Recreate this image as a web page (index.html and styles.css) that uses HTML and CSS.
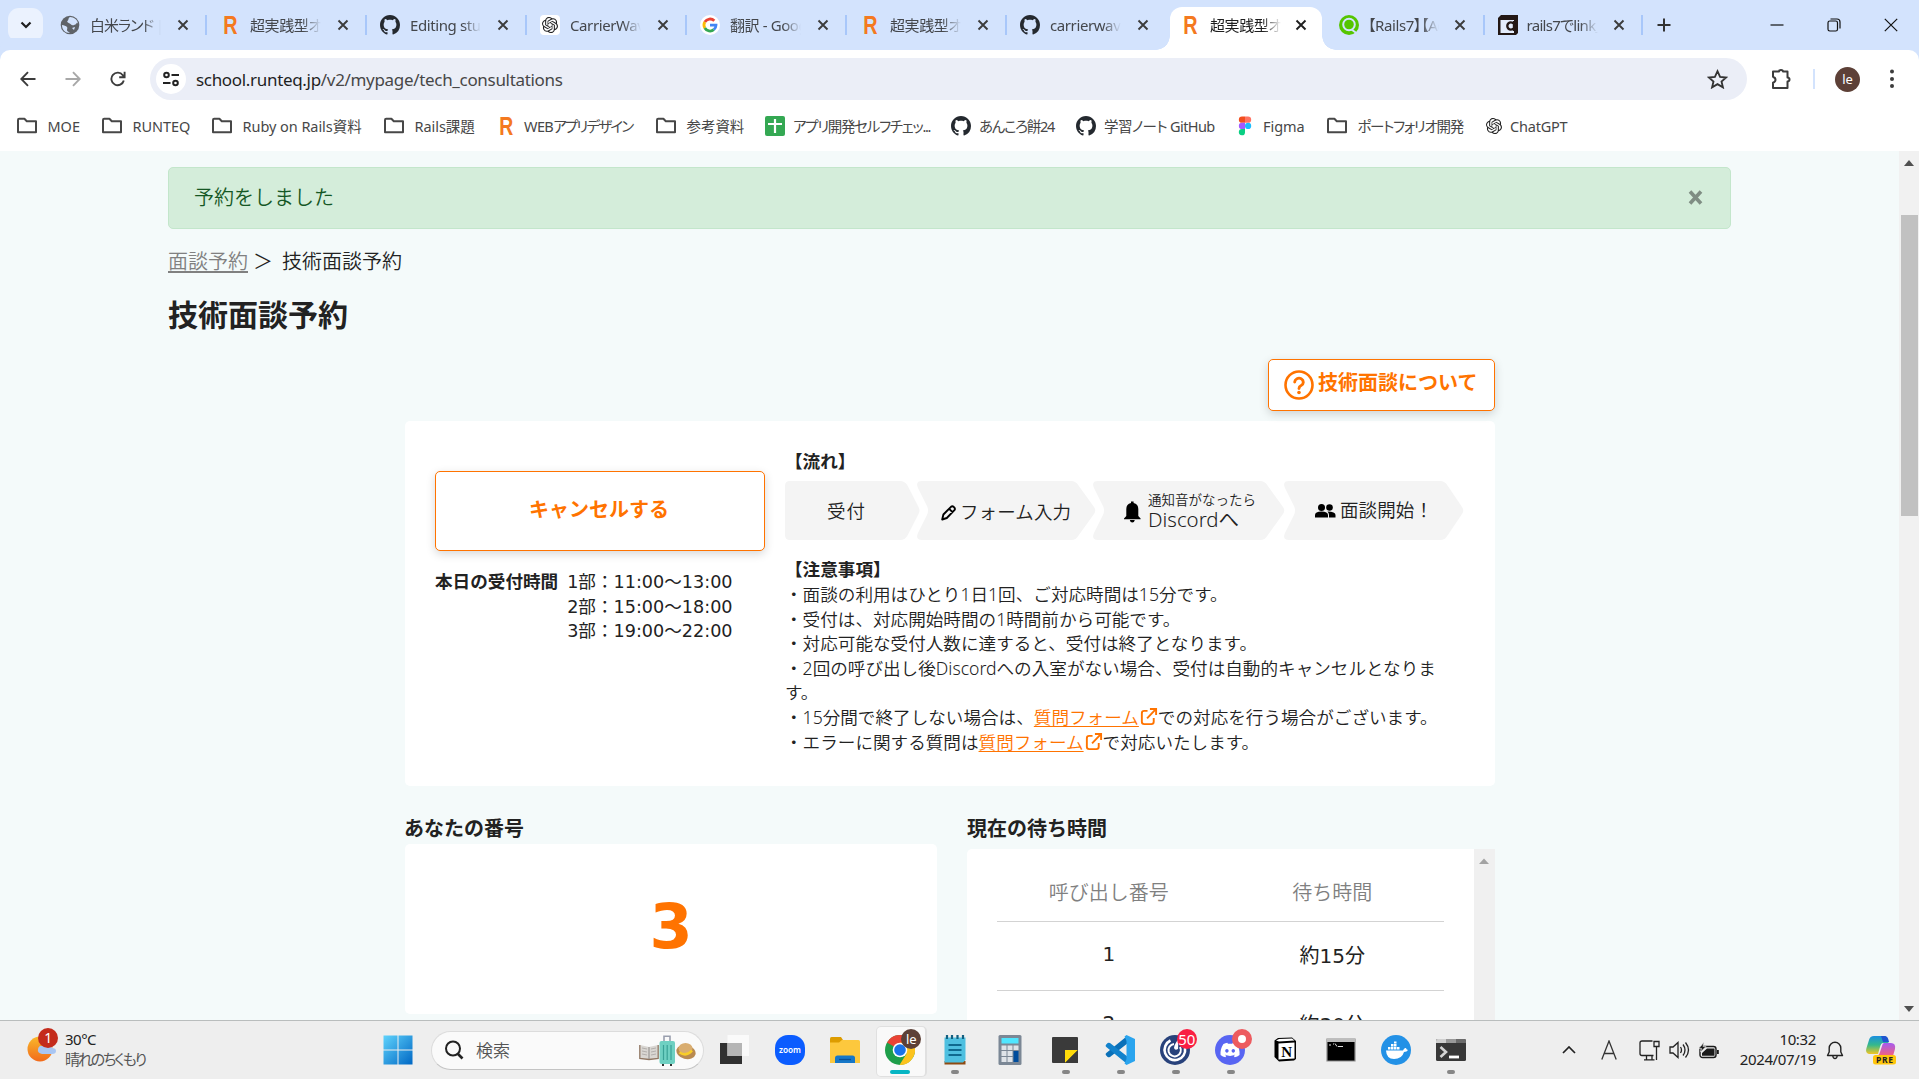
FILE: index.html
```html
<!DOCTYPE html>
<html lang="ja">
<head>
<meta charset="utf-8">
<title>技術面談予約</title>
<link rel="stylesheet" href="styles.css">
</head>
<body>
<svg class="defs" width="0" height="0" aria-hidden="true">
  <symbol id="close" viewBox="0 0 12 12"><path d="M1.5 1.5l9 9M10.5 1.5l-9 9" stroke="currentColor" stroke-width="1.9" fill="none"/></symbol>
  <symbol id="folder" viewBox="0 0 22 18"><path d="M2 3v12.2h18V4.2h-9.2L8.4 1.8H3.200Q2 1.800 2 3z" fill="none" stroke="#474747" stroke-width="2" stroke-linejoin="round"/></symbol>
  <symbol id="github" viewBox="0 0 16 16"><path fill="#24292f" d="M8 0C3.58 0 0 3.58 0 8c0 3.54 2.29 6.53 5.47 7.59.4.07.55-.17.55-.38 0-.19-.01-.82-.01-1.49-2.01.37-2.53-.49-2.69-.94-.09-.23-.48-.94-.82-1.13-.28-.15-.68-.52-.01-.53.63-.01 1.08.58 1.23.82.72 1.21 1.87.87 2.33.66.07-.52.28-.87.51-1.07-1.78-.2-3.64-.89-3.64-3.95 0-.87.31-1.59.82-2.15-.08-.2-.36-1.02.08-2.12 0 0 .67-.21 2.2.82.64-.18 1.32-.27 2-.27s1.36.09 2 .27c1.53-1.04 2.2-.82 2.2-.82.44 1.1.16 1.92.08 2.12.51.56.82 1.27.82 2.15 0 3.07-1.87 3.75-3.65 3.95.29.25.54.73.54 1.48 0 1.07-.01 1.93-.01 2.2 0 .21.15.46.55.38A8.01 8.01 0 0 0 16 8c0-4.42-3.58-8-8-8z"/></symbol>
  <symbol id="openai" viewBox="0 0 24 24"><path fill="#222" d="M22.2819 9.8211a5.9847 5.9847 0 0 0-.5157-4.9108 6.0462 6.0462 0 0 0-6.5098-2.9A6.0651 6.0651 0 0 0 4.9807 4.1818a5.9847 5.9847 0 0 0-3.9977 2.9 6.0462 6.0462 0 0 0 .7427 7.0966 5.98 5.98 0 0 0 .511 4.9107 6.051 6.051 0 0 0 6.5146 2.9001A5.9847 5.9847 0 0 0 13.2599 24a6.0557 6.0557 0 0 0 5.7718-4.2058 5.9894 5.9894 0 0 0 3.9977-2.9001 6.0557 6.0557 0 0 0-.7475-7.0729zm-9.022 12.6081a4.4755 4.4755 0 0 1-2.8764-1.0408l.1419-.0804 4.7783-2.7582a.7948.7948 0 0 0 .3927-.6813v-6.7369l2.02 1.1686a.071.071 0 0 1 .038.052v5.5826a4.504 4.504 0 0 1-4.4945 4.4944zm-9.6607-4.1254a4.4708 4.4708 0 0 1-.5346-3.0137l.142.0852 4.783 2.7582a.7712.7712 0 0 0 .7806 0l5.8428-3.3685v2.3324a.0804.0804 0 0 1-.0332.0615L9.74 19.9502a4.4992 4.4992 0 0 1-6.1408-1.6464zM2.3408 7.8956a4.485 4.485 0 0 1 2.3655-1.9728V11.6a.7664.7664 0 0 0 .3879.6765l5.8144 3.3543-2.0201 1.1685a.0757.0757 0 0 1-.071 0l-4.8303-2.7865A4.504 4.504 0 0 1 2.3408 7.872zm16.5963 3.8558L13.1038 8.364 15.1192 7.2a.0757.0757 0 0 1 .071 0l4.8303 2.7913a4.4944 4.4944 0 0 1-.6765 8.1042v-5.6772a.79.79 0 0 0-.407-.667zm2.0107-3.0231l-.142-.0852-4.7735-2.7818a.7759.7759 0 0 0-.7854 0L9.409 9.2297V6.8974a.0662.0662 0 0 1 .0284-.0615l4.8303-2.7866a4.4992 4.4992 0 0 1 6.6802 4.66zM8.3065 12.863l-2.02-1.1638a.0804.0804 0 0 1-.038-.0567V6.0742a4.4992 4.4992 0 0 1 7.3757-3.4537l-.142.0805L8.704 5.459a.7948.7948 0 0 0-.3927.6813zm1.0976-2.3654l2.602-1.4998 2.6069 1.4998v2.9994l-2.5974 1.4997-2.6067-1.4997Z"/></symbol>
  <symbol id="runteq" viewBox="0 0 20 20"><text x="3.200" y="19" font-family="Liberation Sans, sans-serif" font-weight="700" font-size="25" textLength="14" lengthAdjust="spacingAndGlyphs" fill="#f47920">R</text></symbol>
  <symbol id="external" viewBox="0 0 20 20"><path d="M9 3.500H5.500Q3 3.500 3 6v9q0 2.500 2.500 2.500H13q2.500 0 2.500-2.500v-4M11.500 1.500H18V8M17.500 2L8.500 11.500" fill="none" stroke="#ff7300" stroke-width="2"/></symbol>
  <symbol id="chrome" viewBox="0 0 30 30"><circle cx="15" cy="15" r="15" fill="#1e9e4a"/><path d="M15 15L2 7.500A15 15 0 0 1 28 7.500z" fill="#ea4335"/><path d="M15 7.500h13A15 15 0 0 1 14.500 30L21.500 18.700z" fill="#fcc31e"/><circle cx="15" cy="15" r="7.300" fill="#fff"/><circle cx="15" cy="15" r="5.800" fill="#1a73e8"/></symbol>
</svg>

<header class="tabstrip">
  <button class="tabsearch"><svg width="12" height="8" viewBox="0 0 12 8"><path d="M1.500 1.500L6 6l4.500-4.500" fill="none" stroke="#1f1f1f" stroke-width="2.200"/></svg></button>
  <div class="tab"><svg class="fav" viewBox="0 0 20 20"><circle cx="10" cy="10" r="9.300" fill="#5f6368"/><path d="M2 10c2 .5 4 .5 5 2s-1 3 1 4.500l2 1.500c-5 0-8-3.500-8-8zM10 2c-2 1-1 2.500-2.500 4S10 8 11 9.500s4 .5 5-.5 1-2 2 0c0-4-4-7-8-7zM12 13l3-1-1 3z" fill="#d3e3fd"/></svg><span class="title kana">白米ランド | ホーム</span><svg class="x"><use href="#close"/></svg></div>
  <div class="tab"><svg class="fav"><use href="#runteq"/></svg><span class="title">超実践型オンライン</span><svg class="x"><use href="#close"/></svg></div>
  <div class="tab"><svg class="fav"><use href="#github"/></svg><span class="title">Editing study</span><svg class="x"><use href="#close"/></svg></div>
  <div class="tab"><span class="fav plate"><svg width="16" height="16"><use href="#openai"/></svg></span><span class="title">CarrierWave</span><svg class="x"><use href="#close"/></svg></div>
  <div class="tab"><svg class="fav" viewBox="0 0 20 20"><circle cx="10" cy="10" r="10" fill="#fff"/><g fill="none" stroke-width="2.800"><path d="M14.300 5.800A6 6 0 0 0 4.800 7" stroke="#ea4335"/><path d="M4.800 7a6 6 0 0 0 0 6" stroke="#fbbc05"/><path d="M4.800 13a6 6 0 0 0 9 1.700" stroke="#34a853"/><path d="M13.800 14.700A6 6 0 0 0 16 10.200h-6" stroke="#4285f4"/></g></svg><span class="title">翻訳 - Google</span><svg class="x"><use href="#close"/></svg></div>
  <div class="tab"><svg class="fav"><use href="#runteq"/></svg><span class="title">超実践型オンライン</span><svg class="x"><use href="#close"/></svg></div>
  <div class="tab last"><svg class="fav"><use href="#github"/></svg><span class="title">carrierwave</span><svg class="x"><use href="#close"/></svg></div>
  <div class="tab active"><svg class="fav"><use href="#runteq"/></svg><span class="title">超実践型オンライン</span><svg class="x"><use href="#close"/></svg></div>
  <div class="tab narrow"><svg class="fav" viewBox="0 0 20 20"><circle cx="10" cy="10" r="10" fill="#55c500"/><circle cx="10" cy="9.500" r="5.800" fill="none" stroke="#d3e3fd" stroke-width="2"/><path d="M12.500 14.500l5.500 4" stroke="#d3e3fd" stroke-width="2"/></svg><span class="title">【Rails7】【Active】</span><svg class="x"><use href="#close"/></svg></div>
  <div class="tab narrow"><svg class="fav" viewBox="0 0 20 20"><path d="M3 0h17v18l-2 2H0V3z" fill="#231815"/><path d="M2.500 5H16v13H2.500z" fill="#e4edfc"/><path d="M15.500 8.500a3.600 3.600 0 1 0 0 5" fill="none" stroke="#231815" stroke-width="2.400"/><path d="M16 6v10" stroke="#231815" stroke-width="2.400"/></svg><span class="title rails">rails7でlink_to</span><svg class="x"><use href="#close"/></svg></div>
  <svg class="newtab" viewBox="0 0 14 14"><path d="M7 .5v13M.5 7h13" stroke="#333" stroke-width="2"/></svg>
  <div class="winctl">
    <svg width="14" height="14" viewBox="0 0 14 14"><path d="M.5 7h13" stroke="#111" stroke-width="1.200"/></svg>
    <svg width="14" height="14" viewBox="0 0 14 14"><rect x="1" y="3" width="9.500" height="10" rx="1.800" fill="none" stroke="#111" stroke-width="1.200"/><path d="M3.500 1h6.500q3 0 3 3v6.500" fill="none" stroke="#111" stroke-width="1.200"/></svg>
    <svg width="14" height="14" viewBox="0 0 14 14"><path d="M.8.8l12.400 12.400M13.200.8L.8 13.200" stroke="#111" stroke-width="1.200"/></svg>
  </div>
</header>

<div class="chrome">
  <div class="toolbar">
    <svg class="nav" viewBox="0 0 16 16"><path d="M15.500 8H1.500M8 1.200L1.300 8 8 14.800" fill="none" stroke="#3c3c3c" stroke-width="1.900"/></svg>
    <svg class="nav" viewBox="0 0 16 16"><path d="M.5 8h14M8 1.200L14.700 8 8 14.800" fill="none" stroke="#a8a8a8" stroke-width="1.900"/></svg>
    <svg class="nav" viewBox="0 0 16 16"><path d="M13.800 9.500A6.300 6.300 0 1 1 12.800 4.200L14 5.600M14.600.8v5.400H9.200" fill="none" stroke="#3c3c3c" stroke-width="1.900"/></svg>
    <div class="omnibox">
      <span class="site"><svg width="18" height="16" viewBox="0 0 18 16"><g fill="none" stroke="#222" stroke-width="2"><circle cx="4.500" cy="4" r="2.300"/><path d="M9.500 4H17M1 12h7.500"/><circle cx="13.500" cy="12" r="2.300"/></g></svg></span>
      <span class="url"><b>school.runteq.jp</b>/v2/mypage/tech_consultations</span>
      <svg class="star" viewBox="0 0 22 20"><path d="M11 1.800l2.700 6 6.400.6-4.900 4.200 1.500 6.200-5.700-3.400-5.700 3.400 1.500-6.200L1.900 8.400l6.400-.6z" fill="none" stroke="#333" stroke-width="1.900"/></svg>
    </div>
    <svg class="puzzle" viewBox="0 0 22 22"><path d="M3 3.500h6Q9 2 11 2t2 1.500h4.500V9.500q2 .3 2 2t-2 2V20H3v-5.200q2.500-1 2.500-3T3 8.800z" fill="none" stroke="#3c3c3c" stroke-width="2" stroke-linejoin="round"/></svg>
    <i class="tsep"></i>
    <span class="avatar">le</span>
    <svg class="dots" viewBox="0 0 4 20"><g fill="#3c3c3c"><circle cx="2" cy="2.500" r="2"/><circle cx="2" cy="10" r="2"/><circle cx="2" cy="17" r="2"/></g></svg>
  </div>
  <nav class="bookmarks">
    <a><svg><use href="#folder"/></svg><span>MOE</span></a>
    <a><svg><use href="#folder"/></svg><span>RUNTEQ</span></a>
    <a><svg><use href="#folder"/></svg><span>Ruby on Rails資料</span></a>
    <a><svg><use href="#folder"/></svg><span>Rails課題</span></a>
    <a class="close-set"><svg><use href="#runteq"/></svg><span><span class="snug">WEB</span><span class="tighter">アプリデザイン</span></span></a>
    <a><svg><use href="#folder"/></svg><span>参考資料</span></a>
    <a class="close-set"><svg viewBox="0 0 20 20"><rect width="20" height="20" rx="2" fill="#34a853"/><path d="M10 3v14M3 8h14" stroke="#fff" stroke-width="2.200"/></svg><span class="tight">アプリ開発セルフチェッ...</span></a>
    <a class="close-set"><svg><use href="#github"/></svg><span class="tight">あんころ餅24</span></a>
    <a class="close-set"><svg><use href="#github"/></svg><span class="snug">学習ノート GitHub</span></a>
    <a class="close-set"><svg viewBox="0 0 20 20"><path d="M10 .5H7a3.100 3.100 0 0 0 0 6.300h3z" fill="#f24e1e"/><path d="M10 .5h3a3.100 3.100 0 0 1 0 6.300h-3z" fill="#ff7262"/><path d="M10 6.800H7a3.100 3.100 0 0 0 0 6.300h3z" fill="#a259ff"/><circle cx="13.100" cy="9.900" r="3.100" fill="#1abcfe"/><path d="M10 13.100H7a3.100 3.100 0 1 0 3 3.300z" fill="#0acf83"/></svg><span>Figma</span></a>
    <a><svg><use href="#folder"/></svg><span class="tight">ポートフォリオ開発</span></a>
    <a class="close-set"><svg viewBox="-3 -3 30 30"><use href="#openai" width="24" height="24"/></svg><span class="gpt">ChatGPT</span></a>
  </nav>
</div>

<div class="viewport">
  <main>
    <div class="alert"><span>予約をしました</span><svg width="15" height="15" viewBox="0 0 15 15"><path d="M2 1.500l11 12M13 1.500l-11 12" stroke="#7f8d83" stroke-width="3.600"/></svg></div>
    <div class="crumbs"><a>面談予約</a><span class="gt">＞</span><span>技術面談予約</span></div>
    <h1>技術面談予約</h1>
    <div class="panel">
      <div class="about"><a class="btn help"><svg width="30" height="30" viewBox="0 0 30 30"><circle cx="15" cy="15" r="13.500" fill="none" stroke="#ff7300" stroke-width="2.600"/><path d="M10.700 12a4.300 3.900 0 1 1 6.400 3.500Q15 16.500 15 18.500" fill="none" stroke="#ff7300" stroke-width="2.900" stroke-linecap="round"/><circle cx="15" cy="22.500" r="1.800" fill="#ff7300"/></svg><span>技術面談について</span></a></div>
      <section class="card">
        <div class="left">
          <a class="btn cancel">キャンセルする</a>
          <div class="hours"><strong>本日の受付時間</strong><div><p>1部：11:00～13:00</p><p>2部：15:00～18:00</p><p>3部：19:00～22:00</p></div></div>
        </div>
        <div class="right">
          <strong>【流れ】</strong>
          <svg class="flow" width="680" height="59" viewBox="0 0 680 59">
            <g fill="#f4f4f4">
              <path d="M5 0H115Q120 0 122.500 4.500L133.500 26Q135.500 29.500 133.500 33L122.500 54.500Q120 59 115 59H5Q0 59 0 54V5Q0 0 5 0z"/>
              <path d="M137 0H286Q291 0 293.500 4.500L309 26Q311.500 29.500 309 33L293.500 54.500Q291 59 286 59H137Q130 59 133 52L142 34Q144 29.500 142 25L133 7Q130 0 137 0z"/>
              <path d="M313 0H475Q480 0 482.500 4.500L498 26Q500.500 29.500 498 33L482.500 54.500Q480 59 475 59H313Q306 59 309 52L318 34Q320 29.500 318 25L309 7Q306 0 313 0z"/>
              <path d="M504 0H655Q660 0 662.500 4.500L677 26Q679.500 29.500 677 33L662.500 54.500Q660 59 655 59H504Q497 59 500 52L509 34Q511 29.500 509 25L500 7Q497 0 504 0z"/>
            </g>
            <g fill="#222" font-size="18.500">
              <text x="42" y="36.500" textLength="38">受付</text>
              <text x="175" y="37.500" textLength="111">フォーム入力</text>
              <text x="363" y="23.500" font-size="13.500" textLength="108">通知音がなったら</text>
              <text x="363" y="46" textLength="91" font-size="20" lengthAdjust="spacingAndGlyphs">Discordへ</text>
              <text x="555" y="36" textLength="93">面談開始！</text>
            </g>
            <g transform="translate(156 24)"><path d="M1.200 14.500l1.200-5L10 1.800q1.400-1 2.800.2l.6.700q1 1.300 0 2.500L5.800 13z M8.200 3.800l3.500 3.500" fill="none" stroke="#000" stroke-width="1.900" stroke-linejoin="round"/></g>
            <path d="M339 37.500l2.300-2.500V28q0-5 4.700-6V20.500h2.600V22q4.700 1 4.700 6v7l2.300 2.500v.8H339zM344.800 39h5q-.5 2.500-2.500 2.500t-2.500-2.500z"/>
            <g><circle cx="536.500" cy="26.500" r="3.500"/><circle cx="544.500" cy="26.500" r="3.300"/><path d="M530 36.500v-2.500q0-3.500 6.500-3.500t6.500 3.500v2.500zM544 36.500v-2.500q0-2-1.500-3.500 8 0 8 3.500v2.500z"/></g>
          </svg>
          <strong>【注意事項】</strong>
          <p>・面談の利用はひとり1日1回、ご対応時間は15分です。</p>
          <p>・受付は、対応開始時間の1時間前から可能です。</p>
          <p>・対応可能な受付人数に達すると、受付は終了となります。</p>
          <p>・2回の呼び出し後Discordへの入室がない場合、受付は自動的キャンセルとなりま<br>す。</p>
          <p>・15分間で終了しない場合は、<a>質問フォーム</a><svg class="ext"><use href="#external"/></svg>での対応を行う場合がございます。</p>
          <p>・エラーに関する質問は<a>質問フォーム</a><svg class="ext"><use href="#external"/></svg>で対応いたします。</p>
        </div>
      </section>
      <div class="cols">
        <section class="mine"><h2>あなたの番号</h2><div class="number">3</div></section>
        <section class="wait"><h2>現在の待ち時間</h2>
          <div class="box">
            <div class="rows">
              <div class="row head"><span>呼び出し番号</span><span>待ち時間</span></div>
              <div class="row"><span>1</span><span>約15分</span></div>
              <div class="row"><span>2</span><span>約30分</span></div>
            </div>
            <div class="inner-scroll"><svg width="10" height="6" viewBox="0 0 10 6"><path d="M0 6l5-5.500L10 6z" fill="#a3a3a3"/></svg></div>
          </div>
        </section>
      </div>
    </div>
  </main>
  <div class="scrollbar"><svg width="10" height="6" viewBox="0 0 10 6"><path d="M0 6l5-6 5 6z" fill="#505050"/></svg><i></i><svg class="down" width="10" height="6" viewBox="0 0 10 6"><path d="M0 0h10L5 6z" fill="#505050"/></svg></div>
</div>

<footer class="taskbar">
  <div class="weather">
    <svg width="32" height="38" viewBox="0 0 32 38"><defs><linearGradient id="sun" x2="0" y2="1"><stop offset="0" stop-color="#f9b92b"/><stop offset="1" stop-color="#f26a1b"/></linearGradient></defs><circle cx="13" cy="23" r="12.500" fill="url(#sun)"/><path d="M15 28q-5-1-4-5t5-3q2-5 6-3t3 5q4 0 4 3t-4 3z" fill="#a9c6f3"/><circle cx="21" cy="12" r="10" fill="#c42b1c"/><text x="21" y="17" text-anchor="middle" fill="#fff" font-size="14">1</text></svg>
    <div><p>30°C</p><p class="cond">晴れのちくもり</p></div>
  </div>
  <div class="apps">
    <svg class="win" width="30" height="30" viewBox="0 0 30 30"><defs><linearGradient id="w" x2="1" y2="1"><stop offset="0" stop-color="#5fd3fc"/><stop offset="1" stop-color="#0067c4"/></linearGradient></defs><path d="M.5.5h14v14H.5zM15.500.5h14v14h-14zM.5 15.500h14v14H.5zM15.500 15.500h14v14h-14z" fill="url(#w)"/></svg>
    <div class="search"><svg width="20" height="20" viewBox="0 0 20 20"><circle cx="9" cy="8.500" r="7" fill="none" stroke="#222" stroke-width="2"/><path d="M13.500 13.500l5 5" stroke="#222" stroke-width="2.600"/></svg><span>検索</span>
      <svg class="trip" width="58" height="32" viewBox="0 0 58 32"><path d="M1 11l9 2 9-2v13l-9 1.500L1 24z" fill="#d9d6d2"/><path d="M.8 11v13.500l9.200 1 9.200-1V11" fill="none" stroke="#8f7662" stroke-width="1.300"/><path d="M10 13v12" stroke="#8d8a88"/><path d="M3 14l5 1M3 17l5 1M3 20l5 1M12 15l5-1M12 18l5-1M12 21l5-1" stroke="#b3afac"/><path d="M25 8V2.200h6V8" fill="none" stroke="#9a9fae" stroke-width="1.600"/><rect x="20.500" y="7" width="15.500" height="23" rx="2" fill="#6fd0c2"/><path d="M24.500 11v15M28.200 11v15M32 11v15" stroke="#3aa297" stroke-width="1.200"/><path d="M23 31h2M31 31h2" stroke="#333" stroke-width="2"/><ellipse cx="47" cy="18" rx="9.800" ry="7" transform="rotate(15 47 18)" fill="#b98a50"/><ellipse cx="46.500" cy="14.500" rx="7" ry="5.500" fill="#d9ad70"/><path d="M40.500 18.500q7 4.500 12.500-2" fill="none" stroke="#f8cd28" stroke-width="2.600"/></svg>
    </div>
    <div class="icons">
      <span><svg viewBox="0 0 30 30"><path d="M0 8h22v21H0z" fill="#303030"/><path d="M7.500 0H29v21H7.500z" fill="#fafafa"/><path d="M7.500 8H22v13H7.500z" fill="#b5b5b5"/></svg></span>
      <span><svg viewBox="0 0 30 30"><rect width="30" height="30" rx="13" fill="#0b5cff"/><text x="15" y="18" text-anchor="middle" fill="#fff" font-size="9" font-weight="600" textLength="22" lengthAdjust="spacingAndGlyphs">zoom</text></svg></span>
      <span><svg viewBox="0 0 30 30"><path d="M0 3.500Q0 2 1.500 2H11l2 3v4H0z" fill="#dd9c00"/><path d="M0 7.500h9L12 5h16.500Q30 5 30 6.500V28H0z" fill="#fdc83d"/><path d="M5 28v-5q0-2.500 2.500-2.500h15Q25 20.500 25 23v5z" fill="#1677c8"/><path d="M9 24.500h12" stroke="#0a4f96" stroke-width="1.300"/></svg></span>
      <span class="on"><svg><use href="#chrome"/></svg><b class="badge brown">le</b><i class="line wide"></i></span>
      <span><svg viewBox="0 0 30 30"><path d="M4.500 26h21v3.500h-21z" fill="#8f4a12"/><path d="M4.500 2.500h21V25L23 27.500H4.500z" fill="#4fc0e0"/><path d="M7 0v4M12 0v4M17.500 0v4M23 0v4" stroke="#125f80" stroke-width="2.200"/><path d="M8.500 10h13M8.500 15h13M8.500 20h13" stroke="#0f6a8f" stroke-width="1.800"/></svg><i class="line"></i></span>
      <span><svg viewBox="0 0 30 30"><rect x="3.500" width="23" height="30" rx="1.500" fill="#7b8795"/><rect x="6.500" y="3" width="17" height="5.500" fill="#50e6ff"/><path d="M6.500 10.500h5v4.500h-5zM12.500 10.500h5v4.500h-5zM18.500 10.500h5v4.500h-5zM6.500 16h5v5h-5zM12.500 16h5v5h-5zM6.500 22h5v5h-5zM12.500 22h5v5h-5z" fill="#dfe3e8"/><path d="M18.500 16h5v11h-5z" fill="#004c9c"/></svg></span>
      <span><svg viewBox="0 0 30 30"><rect x="2" y="2" width="26" height="26" rx="1" fill="#3a3a3a"/><path d="M15 15h13L15 28z" fill="#ffdb0a"/><path d="M28 15v13H15z" fill="#3a3a3a"/></svg><i class="line"></i></span>
      <span><svg viewBox="0 0 30 30"><path d="M21.500 1.500L1.300 18q-1.300 1-.3 2.200l1.700 1.700q1 .9 2.300 0L23 8z" fill="#0a70b8"/><path d="M21.500 28.500L1.300 12q-1.300-1-.3-2.200l1.700-1.700q1-.9 2.300 0L23 22z" fill="#1282cc"/><path d="M21.500 0L30 4v22l-8.500 4-2-1.500L21.500 24V6l-2-4.500z" fill="#2aa4ee"/></svg><i class="line"></i></span>
      <span><svg viewBox="0 0 30 30"><circle cx="15" cy="15" r="15" fill="#28427b"/><path d="M10.500 5.500A10.300 10.300 0 1 0 25 13" fill="none" stroke="#fff" stroke-width="2.600"/><path d="M14 9A6.200 6.200 0 1 0 20 12" fill="none" stroke="#fff" stroke-width="2"/><path d="M18.500 4l-.5 10q-3 2-4-1 0-3 4.500-9z" fill="#fff"/></svg><b class="badge red">50</b><i class="line"></i></span>
      <span><svg viewBox="0 0 30 30"><circle cx="15" cy="15" r="15" fill="#5865f2"/><path transform="translate(5.500 5.500) scale(.8)" fill="#fff" d="M20.317 4.370a19.791 19.791 0 0 0-4.885-1.515l-.7 1.300a18.270 18.270 0 0 0-5.470 0l-.7-1.300A19.736 19.736 0 0 0 3.677 4.370C.533 9.046-.32 13.580.099 18.058a19.900 19.900 0 0 0 5.993 3.030l1.300-2-1.900-.9.400-.3c3.900 1.800 8.200 1.800 12.100 0l.4.3-1.900.9 1.300 2a19.839 19.839 0 0 0 6.002-3.030c.5-5.177-.838-9.674-3.549-13.660zM8.020 15.330c-1.180 0-2.160-1.080-2.160-2.420s.96-2.420 2.160-2.420 2.180 1.100 2.160 2.420c0 1.340-.96 2.420-2.160 2.420zm7.970 0c-1.180 0-2.160-1.080-2.160-2.420s.96-2.420 2.160-2.420 2.180 1.100 2.160 2.420c0 1.340-.95 2.420-2.160 2.420z"/></svg><b class="badge rose"></b><i class="line"></i></span>
      <span><svg viewBox="0 0 30 30"><path d="M4.500 5.500L8 3l14-.5 4 3.500v18l-2 1.500-15 1L4.500 22z" fill="#000"/><path d="M6 5.500l3-1.500 13-.5 2.500 2L9 6.500z" fill="#fff"/><path d="M8.500 8.500L24.500 7.500v16l-16 1z" fill="#fff"/><text x="16.700" y="21.500" text-anchor="middle" font-family="Liberation Serif, serif" font-weight="700" font-size="15">N</text></svg></span>
      <span><svg viewBox="0 0 30 30"><path d="M1 4h28v22H1z" fill="#000" stroke="#8d8d8d" stroke-width="1.200"/><path d="M1 4h28v3H1z" fill="#bdbdbd"/><path d="M4 9v2M7 9h1M9 8.500l2 3M12 11.500h5" stroke="#ddd"/></svg></span>
      <span><svg viewBox="0 0 30 30"><circle cx="15" cy="15" r="15" fill="#2391e6"/><path d="M5 15.500h17q1-3 3-2.500 0 1.500 2 2-1 2-4 2-2 7-10 7-7.500 0-8-8.500zM7 12h2.500v2.500H7zM10 12h2.500v2.500H10zM13 12h2.500v2.500H13zM16 12h2.500v2.500H16zM10 9h2.500v2.500H10zM13 9h2.500v2.500H13zM13 6.500h2.500v2H13z" fill="#fff"/></svg></span>
      <span><svg viewBox="0 0 30 30"><rect y="4" width="30" height="22" rx="1.500" fill="#383838"/><path d="M0 8V5.500Q0 4 1.500 4H10v4z" fill="#d0d0d0"/><path d="M10 4h10v4H10z" fill="#999"/><path d="M20 4h8.500Q30 4 30 5.500V8H20z" fill="#6b6b6b"/><path d="M4.500 12l5.500 5-5.500 5" fill="none" stroke="#d4d4d4" stroke-width="2.600"/><path d="M13 22h10" stroke="#fff" stroke-width="2.800"/></svg><i class="line"></i></span>
    </div>
  </div>
  <div class="tray">
    <svg width="14" height="8" viewBox="0 0 14 8"><path d="M1 7l6-6 6 6" fill="none" stroke="#222" stroke-width="1.700"/></svg>
    <svg class="ime" width="16" height="20" viewBox="0 0 16 20"><path d="M.8 19.500L8 1l7.200 18.500M3.200 13.500h9.600" fill="none" stroke="#333" stroke-width="1.300"/></svg>
    <svg class="net" width="21" height="21" viewBox="0 0 21 21"><g fill="none" stroke="#222" stroke-width="1.300"><path d="M13.500 1H3Q1 1 1 3v10.500q0 2 2 2h11.500M5 19.800h10.500M7.500 16v3.500M13 16v3.500M15 1.500h5v5h-5zM17.500 6.500v13.500"/></g></svg>
    <svg class="vol" width="21" height="18" viewBox="0 0 21 18"><g fill="none" stroke="#222" stroke-width="1.300"><path d="M1 6h3l5-4.500v15L4 12H1zM11.500 6q2 3 0 6M14 3.500q4 5.500 0 11M16.500 1.500q6 7.500 0 15"/></g></svg>
    <svg class="bat" width="20" height="17" viewBox="0 0 20 17"><rect x="1" y="4.500" width="16" height="11" rx="2.500" fill="none" stroke="#1a1a1a" stroke-width="1.400"/><path d="M8 6.500h7.500v7.200H3V11zM18 8h1.800v4H18z" fill="#1a1a1a"/><path d="M5 0L0 6.500h2.500L1.500 10 7 4.500H4z" fill="#1a1a1a" stroke="#eee" stroke-width=".6"/></svg>
    <div class="clock"><p>10:32</p><p>2024/07/19</p></div>
    <svg class="bell" width="18" height="19" viewBox="0 0 18 19"><path d="M1.500 14.500L3.200 11V7a5.800 5.800 0 0 1 11.600 0v4l1.700 3.500zM6.800 15q.3 2.500 2.200 2.500t2.200-2.500" fill="none" stroke="#222" stroke-width="1.400" stroke-linejoin="round"/></svg>
    <svg class="copilot" width="30" height="30" viewBox="0 0 30 30"><defs><linearGradient id="c1" x2="0" y2="1"><stop offset="0" stop-color="#1a8fe0"/><stop offset=".5" stop-color="#35b98c"/><stop offset="1" stop-color="#f3c623"/></linearGradient><linearGradient id="c2" x2="0" y2="1"><stop offset="0" stop-color="#a55bf0"/><stop offset="1" stop-color="#f4627c"/></linearGradient></defs><path d="M8 1h10q3 0 4 4l.5 3H17q-2 0-3 4l-2 7H3q-4-1-2.500-6L3 5q1-4 5-4z" fill="url(#c1)"/><path d="M15 1h4q3 0 4 6h-6z" fill="#1f55cf"/><path d="M18 8h7q5 0 4 6l-2 7H10q3 0 4-4l2-6q.5-3 2-3z" fill="url(#c2)"/><rect x="7" y="20" width="23" height="9.500" rx="2.500" fill="#ffc60b"/><text x="18.500" y="27.700" text-anchor="middle" font-size="8.500" font-weight="700" fill="#222" textLength="17">PRE</text></svg>
  </div>
</footer>
</body>
</html>
```
FILE: styles.css
```css
* { box-sizing: border-box; }
body {
  margin: 0;
  width: 1919px;
  height: 1079px;
  overflow: hidden;
  display: flex;
  flex-direction: column;
  font-family: "Noto Sans", "Noto Sans CJK JP", sans-serif;
  color: #222;
  background: #fff;
}
p, h1, h2 { margin: 0; }
strong { font-weight: 700; }
svg { flex: none; display: block; }
.defs { position: absolute; }

/* tab strip */
.tabstrip {
  height: 50px;
  flex: none;
  display: flex;
  align-items: center;
  background: #d3e3fd;
  padding-left: 8px;
  font-size: 15px;
  letter-spacing: -.4px;
  color: #44474c;
  font-feature-settings: "palt";
}
.tabsearch {
  width: 35px;
  height: 34px;
  border: 0;
  border-radius: 11px;
  background: #ebf2fe;
  padding: 0;
  display: grid;
  place-items: center;
  margin-right: 4px;
}
.tab {
  width: 160px;
  height: 26px;
  flex: none;
  display: flex;
  align-items: center;
  padding-left: 13px;
  background: linear-gradient(#a8c7fa, #a8c7fa) right center / 2px 20px no-repeat;
}
.tab.last { background: none; }
.tab.narrow { width: 158.5px; }
.fav { width: 20px; height: 20px; flex: none; }
.plate { background: #fff; border-radius: 4px; display: grid; place-items: center; }
.title {
  width: 71px;
  margin-left: 10px;
  line-height: 26px;
  white-space: nowrap;
  overflow: hidden;
  -webkit-mask-image: linear-gradient(90deg, #000 75%, transparent);
  mask-image: linear-gradient(90deg, #000 75%, transparent);
}
.title.kana { letter-spacing: -1px; }
.title.rails { letter-spacing: -.7px; }
.x { width: 12px; height: 12px; margin-left: 16px; color: #3c3c3c; }
.narrow .title { margin-left: 9px; }
.narrow .x { margin-left: 15px; }
.tab.active {
  width: 152px;
  height: 43px;
  margin: 7px 4px 0 3px;
  padding: 0 0 7px 10px;
  border-radius: 12px 12px 0 0;
  background: #fff;
  color: #1f1f1f;
  position: relative;
}
.active .x { margin-left: 14px; color: #1f1f1f; }
.tab.active::before, .tab.active::after {
  content: "";
  position: absolute;
  bottom: 0;
  width: 14px;
  height: 14px;
}
.tab.active::before { left: -14px; background: radial-gradient(circle at 0 0, transparent 13.5px, #fff 14px); }
.tab.active::after { right: -14px; background: radial-gradient(circle at 100% 0, transparent 13.5px, #fff 14px); }
.newtab { width: 14px; height: 14px; margin-left: 14px; }
.winctl { margin-left: auto; display: flex; gap: 43px; padding-right: 21px; }

/* toolbar */
.chrome { height: 101px; flex: none; background: #fff; box-shadow: 0 -12px 0 0 #d3e3fd; border-radius: 10px 10px 0 0; }
.toolbar { height: 58px; padding: 8px 0 8px 20px; display: flex; align-items: center; }
.nav { width: 16px; height: 16px; margin-right: 29px; }
.omnibox {
  width: 1597px;
  height: 42px;
  margin-left: -5px;
  background: #ebeef7;
  border-radius: 21px;
  display: flex;
  align-items: center;
  padding-left: 6px;
}
.site { width: 30px; height: 30px; border-radius: 50%; background: #fff; display: grid; place-items: center; }
.url { margin: 2px 0 0 10px; font-size: 17px; line-height: 30px; color: #474747; letter-spacing: -.32px; }
.url b { font-weight: 400; color: #1f1f1f; }
.star { width: 21px; height: 20px; margin-left: auto; margin-right: 19px; }
.puzzle { width: 22px; height: 22px; margin-left: 23px; }
.tsep { width: 2px; height: 20px; background: #d3e3fd; margin-left: 21px; }
.avatar {
  width: 25px;
  height: 25px;
  margin-left: 20px;
  border-radius: 50%;
  background: #5d4037;
  color: #fff;
  font-size: 13px;
  line-height: 24px;
  text-align: center;
}
.dots { width: 4px; height: 20px; margin-left: 30px; }
.bookmarks {
  height: 36px;
  padding-left: 16px;
  display: grid;
  grid-template-columns: 85px 110px 172px 113px 159px 110px 186px 125px 159px 91px 158px 100px;
  font-size: 14.5px;
  letter-spacing: -.05px;
  color: #474747;
  font-feature-settings: "palt";
}
.bookmarks a { display: flex; align-items: center; white-space: nowrap; line-height: 24px; }
.bookmarks svg { width: 22px; height: 20px; margin-right: 9.5px; }
.bookmarks .close-set svg { width: 20px; margin-right: 8px; }
.snug { letter-spacing: -.6px; }
.tight { letter-spacing: -1.3px; }
.tighter { letter-spacing: -1.8px; }
.gpt { margin-left: -2px; letter-spacing: -.2px; }

/* page */
.viewport { flex: 1; min-height: 0; display: flex; overflow: hidden; background: #f4fafa; }
main { flex: 1; padding: 16px 168px 0; font-weight: 350; }
.alert {
  height: 62px;
  border: 1px solid #c3e6cb;
  border-radius: 5px;
  background: #d4edda;
  color: #155724;
  font-size: 20px;
  line-height: 30px;
  padding: 0 27px 0 25px;
  display: flex;
  align-items: center;
  justify-content: space-between;
}
.alert svg { margin-top: -1px; }
.crumbs { margin-top: 18px; font-size: 20px; line-height: 30px; display: flex; }
.crumbs a { color: #808080; text-decoration: underline; text-underline-offset: 2px; }
.gt { width: 34px; padding-left: 5px; }
h1 { margin-top: 19px; font-size: 30px; line-height: 38px; font-weight: 700; }
.panel { width: 1090px; margin: 25px 0 0 237px; }
.about { display: flex; justify-content: flex-end; }
.btn {
  background: #fff;
  border: 1.5px solid #ff7300;
  border-radius: 5px;
  color: #ff7300;
  font-weight: 700;
  font-size: 20px;
  display: flex;
  align-items: center;
  box-shadow: 0 3px 10px rgba(0, 0, 0, .16);
}
.help { width: 227px; height: 52px; padding-left: 15px; gap: 4px; }
.help span { line-height: 28px; margin-top: -4px; }
.card {
  height: 365px;
  margin-top: 10px;
  border-radius: 5px;
  background: #fff;
  padding: 0 30px;
  display: flex;
  gap: 20px;
  font-size: 17.6px;
  line-height: 24.6px;
}
.left { width: 330px; padding-top: 50px; }
.cancel { height: 80px; justify-content: center; padding: 0 2px 2px 0; }
.hours { display: flex; gap: 9px; margin-top: 18px; white-space: nowrap; }
.hours p { position: relative; top: 1px; font-family: "DejaVu Sans", "Noto Sans CJK JP", sans-serif; font-weight: 400; }
.right { width: 680px; padding-top: 28px; white-space: nowrap; }
.right strong { display: block; }
.flow { margin: 7.4px 0 17.4px; }
.right p a { color: #ff7300; text-decoration: underline; text-underline-offset: 2px; }
.ext { display: inline-block; width: 19px; height: 20px; vertical-align: -3px; }
.cols { display: flex; gap: 30px; margin-top: 28px; }
h2 { font-size: 20px; line-height: 30px; font-weight: 700; }
.mine { width: 532px; }
.mine h2 { margin-left: -1px; }
.number {
  height: 170px;
  border-radius: 5px;
  background: #fff;
  display: grid;
  place-items: center;
  color: #ff7300;
  font: 700 62px/1 "DejaVu Sans", sans-serif;
  padding-bottom: 4px;
}
.wait { width: 528px; }
.box { height: 220px; margin-top: 5px; background: #fff; border-radius: 5px 0 0 0; display: flex; }
.rows { flex: 1; padding: 15px 30px 0; font-size: 20px; }
.row {
  height: 69px;
  display: grid;
  grid-template-columns: 1fr 1fr;
  align-items: center;
  text-align: center;
  border-bottom: 1px solid #d3d3d3;
  padding-bottom: 4px;
  font-family: "DejaVu Sans", "Noto Sans CJK JP", sans-serif;
  font-weight: 400;
}
.head { height: 58px; color: #808080; padding-bottom: 2px; font-weight: 350; }
.inner-scroll { width: 21px; background: #f0f0f0; padding: 9px 0 0 5px; }
.scrollbar { width: 20px; background: #f1f1f1; display: flex; flex-direction: column; align-items: center; padding: 9px 0 8px; }
.scrollbar i { width: 17px; height: 301px; margin: 49px 0 auto 1px; background: #c1c1c1; }

/* taskbar */
.taskbar { height: 59px; flex: none; background: #eee; border-top: 1px solid #b9bdbd; display: flex; }
.weather { width: 383px; padding: 5px 0 0 27px; display: flex; gap: 6px; font-size: 15px; line-height: 19.5px; letter-spacing: -.5px; font-feature-settings: "palt"; }
.weather p:first-child { margin-top: 4px; }
.weather .cond { color: #555; letter-spacing: -2.1px; }
.apps { display: flex; align-items: center; }
.search {
  width: 273px;
  height: 39px;
  margin-left: 18px;
  border: 1px solid #dcdcdc;
  border-bottom-color: #c4c4c4;
  border-radius: 20px;
  background: #fafafa;
  display: flex;
  align-items: center;
  padding: 0 6px 0 12px;
  font-size: 17px;
  color: #555;
  font-weight: 350;
}
.search span { margin: -2px 0 0 12px; }
.trip { margin-left: auto; }
.icons { display: flex; margin-left: 3px; }
.icons span { width: 55.1px; height: 58px; display: grid; place-items: center; position: relative; }
.icons span > svg { width: 30px; height: 30px; position: relative; }
.on::before { content: ""; position: absolute; left: 4px; top: 5px; width: 48px; height: 49px; border-radius: 5px; background: #f9f9f9; border: 1px solid #e0e0e0; border-right-width: 2px; }
.line { position: absolute; bottom: 5px; left: 24px; width: 8px; height: 4px; border-radius: 2px; background: #868686; }
.line.wide { width: 20px; left: 18px; background: #06b6c4; }
.badge { position: absolute; left: 29px; top: 8px; width: 20px; height: 20px; border-radius: 50%; color: #fff; font-size: 13px; font-weight: 400; line-height: 20px; text-align: center; }
.brown { background: #5d4037; }
.red { background: #f91f43; font-size: 15px; }
.rose { border: 6px solid #ed5b5f; background: #fff; }
.tray { margin-left: auto; display: flex; align-items: center; padding-right: 23px; }
.ime { margin-left: 25px; }
.net { margin-left: 22px; }
.vol { margin-left: 9px; }
.bat { margin-left: 9px; }
.clock { width: 97px; text-align: right; font-size: 15px; line-height: 20px; letter-spacing: -.35px; margin-top: -2px; }
.bell { margin-left: 10px; }
.copilot { margin-left: 22px; }
```
